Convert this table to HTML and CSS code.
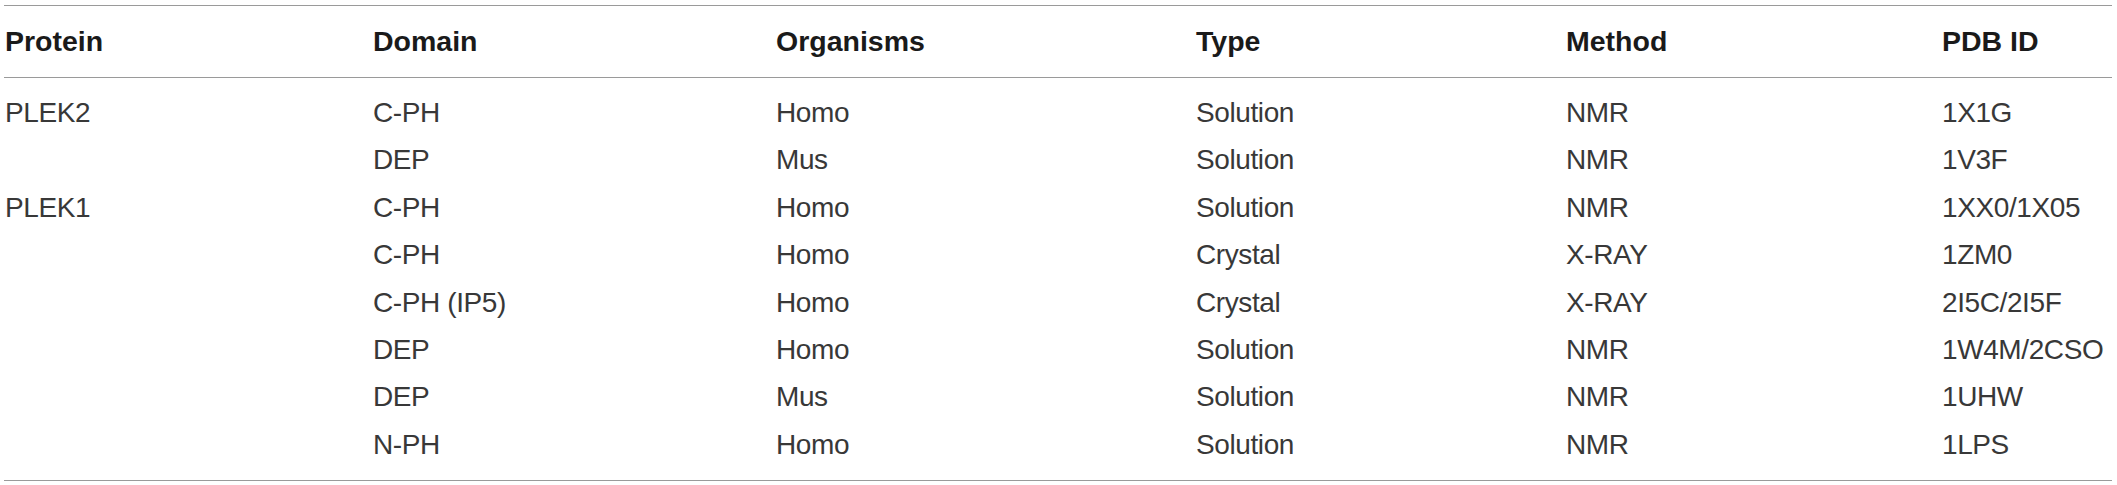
FILE: index.html
```html
<!DOCTYPE html>
<html lang="en">
<head>
<meta charset="utf-8">
<title>Protein structures</title>
<link rel="stylesheet" href="styles.css">
</head>
<body>
<table class="data">
  <colgroup>
    <col class="c1"><col class="c2"><col class="c3"><col class="c4"><col class="c5"><col class="c6">
  </colgroup>
  <thead>
    <tr><th>Protein</th><th>Domain</th><th>Organisms</th><th>Type</th><th>Method</th><th>PDB ID</th></tr>
  </thead>
  <tbody>
    <tr class="first"><td>PLEK2</td><td>C-PH</td><td>Homo</td><td>Solution</td><td>NMR</td><td>1X1G</td></tr>
    <tr><td></td><td>DEP</td><td>Mus</td><td>Solution</td><td>NMR</td><td>1V3F</td></tr>
    <tr><td>PLEK1</td><td>C-PH</td><td>Homo</td><td>Solution</td><td>NMR</td><td>1XX0/1X05</td></tr>
    <tr><td></td><td>C-PH</td><td>Homo</td><td>Crystal</td><td>X-RAY</td><td>1ZM0</td></tr>
    <tr><td></td><td>C-PH (IP5)</td><td>Homo</td><td>Crystal</td><td>X-RAY</td><td>2I5C/2I5F</td></tr>
    <tr><td></td><td>DEP</td><td>Homo</td><td>Solution</td><td>NMR</td><td>1W4M/2CSO</td></tr>
    <tr><td></td><td>DEP</td><td>Mus</td><td>Solution</td><td>NMR</td><td>1UHW</td></tr>
    <tr class="last"><td></td><td>N-PH</td><td>Homo</td><td>Solution</td><td>NMR</td><td>1LPS</td></tr>
  </tbody>
</table>
</body>
</html>
```
FILE: styles.css
```css
html, body {
  margin: 0;
  background: #ffffff;
}
body {
  padding: 5px 5px 0 4px;
}
.data {
  width: 2108px;
  table-layout: fixed;
  border-collapse: separate;
  border-spacing: 0;
  font-family: "Liberation Sans", Arial, Helvetica, sans-serif;
}
.c1 { width: 368px; }
.c2 { width: 403px; }
.c3 { width: 420px; }
.c4 { width: 370px; }
.c5 { width: 376px; }
.c6 { width: 171px; }

.data th {
  text-align: left;
  font-weight: 700;
  font-size: 28.5px;
  line-height: 71px;
  height: 71px;
  padding: 0 0 0 1px;
  color: #1a1a1a;
  border-top: 1px solid #9a9a9a;
  border-bottom: 1px solid #9a9a9a;
  white-space: nowrap;
}
.data td {
  font-size: 28px;
  letter-spacing: -0.4px;
  line-height: 47.4px;
  height: 47.4px;
  padding: 0 0 0 1px;
  color: #383838;
  white-space: nowrap;
  vertical-align: top;
}
.data tr.first td {
  padding-top: 11px;
}
.data tr.last td {
  padding-bottom: 12px;
  border-bottom: 1px solid #9a9a9a;
}
```
